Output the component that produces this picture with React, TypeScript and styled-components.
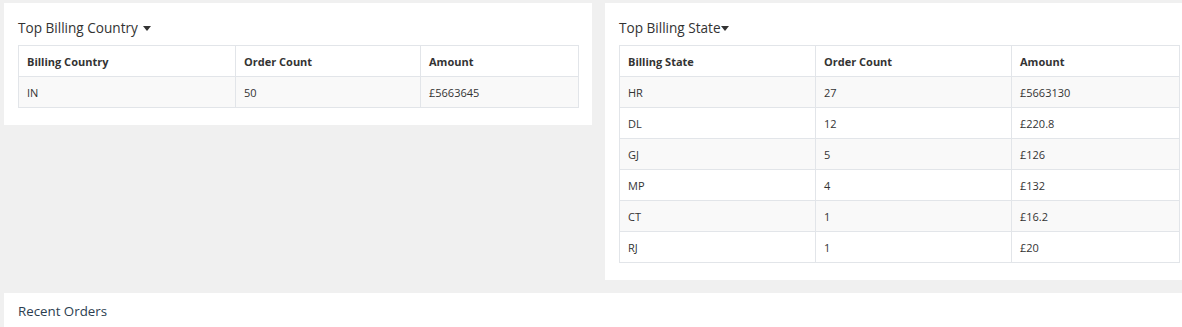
import React from "react";
import styled, { createGlobalStyle } from "styled-components";

const GlobalStyle = createGlobalStyle`
  html, body {
    margin: 0;
    padding: 0;
    background: #f0f0f0;
    overflow: hidden;
  }
  body {
    font-family: "Open Sans", "DejaVu Sans", sans-serif;
    color: #333;
  }
`;

const Page = styled.div`
  width: 1189px;
  padding: 3px 0 0 4px;
`;

const Row = styled.div`
  display: grid;
  grid-template-columns: 588px 588px;
  column-gap: 13px;
  align-items: start;
`;

const Panel = styled.div`
  background: #fff;
  padding: 14px 14px 17px 14px;
`;

const Title = styled.div<{ gap: number }>`
  font-size: 13.6px;
  line-height: 20px;
  height: 22px;
  margin-bottom: 6px;
  display: flex;
  align-items: center;
  gap: ${(p) => p.gap}px;
  color: #333;
`;

const Caret = styled.span`
  display: inline-block;
  width: 0;
  height: 0;
  border-left: 4px solid transparent;
  border-right: 4px solid transparent;
  border-top: 5px solid #333;
  margin-top: 1px;
`;

const Table = styled.table`
  width: 560px;
  border-collapse: collapse;
  table-layout: fixed;
  font-size: 11px;
`;

const Th = styled.th`
  text-align: left;
  font-weight: 700;
  height: 30px;
  padding: 0 8px;
  border: 1px solid #e2e5e9;
  color: #333;
`;

const Tr = styled.tr<{ striped: boolean }>`
  background: ${(p) => (p.striped ? "#f9f9f9" : "#fff")};
`;

const Td = styled.td`
  height: 30px;
  padding: 0 8px;
  border: 1px solid #e2e5e9;
  color: #333;
`;

const Bottom = styled.div`
  margin-top: 13px;
  background: #fff;
  padding: 9px 14px 20px 14px;
  font-size: 13.3px;
  line-height: 18px;
  color: #2c3e50;
`;

type Row3 = [string, string, string];

const DataTable = ({
  head,
  rows,
  widths,
}: {
  head: Row3;
  rows: Row3[];
  widths: number[];
}) => (
  <Table>
    <colgroup>
      {widths.map((w, i) => (
        <col key={i} style={{ width: w }} />
      ))}
    </colgroup>
    <thead>
      <tr>
        {head.map((h) => (
          <Th key={h}>{h}</Th>
        ))}
      </tr>
    </thead>
    <tbody>
      {rows.map((r, i) => (
        <Tr key={i} striped={i % 2 === 0}>
          {r.map((c, j) => (
            <Td key={j}>{c}</Td>
          ))}
        </Tr>
      ))}
    </tbody>
  </Table>
);

const states: Row3[] = [
  ["HR", "27", "£5663130"],
  ["DL", "12", "£220.8"],
  ["GJ", "5", "£126"],
  ["MP", "4", "£132"],
  ["CT", "1", "£16.2"],
  ["RJ", "1", "£20"],
];

export default function App() {
  return (
    <>
      <GlobalStyle />
      <Page>
        <Row>
          <Panel>
            <Title gap={5}>
              Top Billing Country <Caret />
            </Title>
            <DataTable
              head={["Billing Country", "Order Count", "Amount"]}
              rows={[["IN", "50", "£5663645"]]}
              widths={[217, 185, 158]}
            />
          </Panel>
          <Panel>
            <Title gap={0}>
              Top Billing State<Caret />
            </Title>
            <DataTable
              head={["Billing State", "Order Count", "Amount"]}
              rows={states}
              widths={[196, 196, 168]}
            />
          </Panel>
        </Row>
        <Bottom>Recent Orders</Bottom>
      </Page>
    </>
  );
}
